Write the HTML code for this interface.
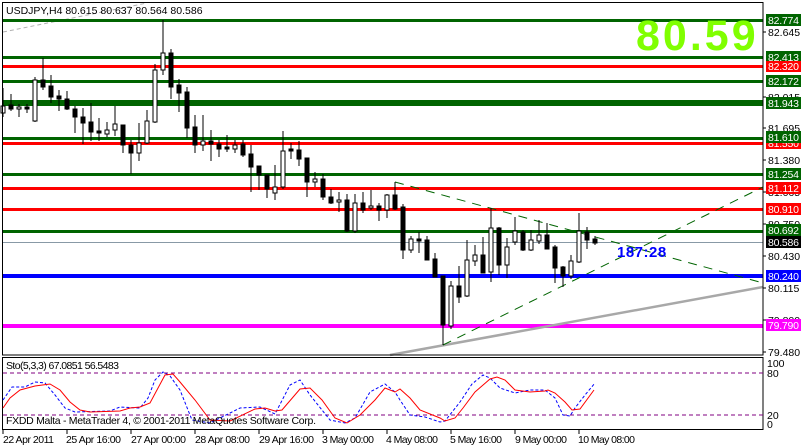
<!DOCTYPE html>
<html><head><meta charset="utf-8"><style>
html,body{margin:0;padding:0;background:#fff;width:801px;height:447px;overflow:hidden}
svg{display:block;font-family:"Liberation Sans",sans-serif}
</style></head><body>
<svg width="801" height="447" viewBox="0 0 801 447" xmlns="http://www.w3.org/2000/svg">
<rect x="0" y="0" width="801" height="447" fill="#fff"/>
<polyline points="3,32 147,3" stroke="#b0b0b0" stroke-width="1" stroke-dasharray="4,3" fill="none"/>
<g>
<rect x="3" y="19" width="760" height="3" fill="#006400"/>
<rect x="3" y="56" width="760" height="3" fill="#006400"/>
<rect x="3" y="65" width="760" height="3" fill="#ff0000"/>
<rect x="3" y="80" width="760" height="3" fill="#006400"/>
<rect x="3" y="100" width="760" height="6" fill="#006400"/>
<rect x="3" y="137" width="760" height="3" fill="#006400"/>
<rect x="3" y="142" width="760" height="3" fill="#ff0000"/>
<rect x="3" y="173" width="760" height="3" fill="#006400"/>
<rect x="3" y="187" width="760" height="3" fill="#ff0000"/>
<rect x="3" y="208" width="760" height="3" fill="#ff0000"/>
<rect x="3" y="230" width="760" height="3" fill="#006400"/>
<rect x="3" y="242" width="760" height="1" fill="#8899a6"/>
<rect x="3" y="274" width="760" height="4" fill="#0000ff"/>
<rect x="3" y="324" width="760" height="4" fill="#ff00ff"/>
</g>
<line x1="390" y1="355" x2="763" y2="287" stroke="#a8a8a8" stroke-width="2.5"/>
<line x1="395" y1="182" x2="763" y2="283" stroke="#006400" stroke-width="1" stroke-dasharray="9,7"/>
<line x1="443" y1="345" x2="763" y2="187" stroke="#006400" stroke-width="1" stroke-dasharray="9,7"/>
<g stroke="#000" stroke-width="1" shape-rendering="crispEdges">
<line x1="3" y1="88" x2="3" y2="117"/><rect x="1" y="106" width="4" height="7" fill="#fff"/>
<line x1="11" y1="94" x2="11" y2="111"/><rect x="9" y="105" width="4" height="4" fill="#000"/>
<line x1="19" y1="104" x2="19" y2="117"/><rect x="17" y="107" width="4" height="2" fill="#fff"/>
<line x1="27" y1="104" x2="27" y2="113"/><rect x="25" y="107" width="4" height="2" fill="#000"/>
<line x1="35" y1="77" x2="35" y2="122"/><rect x="33" y="80" width="4" height="41" fill="#fff"/>
<line x1="43" y1="58" x2="43" y2="90"/><rect x="41" y="80" width="4" height="7" fill="#000"/>
<line x1="51" y1="75" x2="51" y2="103"/><rect x="49" y="86" width="4" height="11" fill="#000"/>
<line x1="59" y1="90" x2="59" y2="111"/><rect x="57" y="96" width="4" height="3" fill="#000"/>
<line x1="67" y1="91" x2="67" y2="110"/><rect x="65" y="99" width="4" height="10" fill="#000"/>
<line x1="75" y1="106" x2="75" y2="133"/><rect x="73" y="109" width="4" height="8" fill="#000"/>
<line x1="83" y1="108" x2="83" y2="144"/><rect x="81" y="117" width="4" height="6" fill="#000"/>
<line x1="91" y1="103" x2="91" y2="141"/><rect x="89" y="122" width="4" height="10" fill="#000"/>
<line x1="99" y1="118" x2="99" y2="141"/><rect x="97" y="131" width="4" height="2" fill="#000"/>
<line x1="107" y1="122" x2="107" y2="137"/><rect x="105" y="130" width="4" height="4" fill="#fff"/>
<line x1="115" y1="106" x2="115" y2="136"/><rect x="113" y="124" width="4" height="6" fill="#fff"/>
<line x1="123" y1="125" x2="123" y2="153"/><rect x="121" y="125" width="4" height="20" fill="#000"/>
<line x1="131" y1="140" x2="131" y2="174"/><rect x="129" y="145" width="4" height="8" fill="#000"/>
<line x1="139" y1="123" x2="139" y2="161"/><rect x="137" y="143" width="4" height="10" fill="#fff"/>
<line x1="147" y1="110" x2="147" y2="144"/><rect x="145" y="121" width="4" height="22" fill="#fff"/>
<line x1="155" y1="64" x2="155" y2="123"/><rect x="153" y="70" width="4" height="52" fill="#fff"/>
<line x1="163" y1="20" x2="163" y2="75"/><rect x="161" y="53" width="4" height="17" fill="#fff"/>
<line x1="171" y1="49" x2="171" y2="99"/><rect x="169" y="53" width="4" height="34" fill="#000"/>
<line x1="179" y1="79" x2="179" y2="112"/><rect x="177" y="85" width="4" height="8" fill="#000"/>
<line x1="187" y1="87" x2="187" y2="138"/><rect x="185" y="92" width="4" height="36" fill="#000"/>
<line x1="195" y1="115" x2="195" y2="153"/><rect x="193" y="127" width="4" height="18" fill="#000"/>
<line x1="203" y1="115" x2="203" y2="151"/><rect x="201" y="141" width="4" height="4" fill="#fff"/>
<line x1="211" y1="130" x2="211" y2="161"/><rect x="209" y="141" width="4" height="3" fill="#000"/>
<line x1="219" y1="140" x2="219" y2="157"/><rect x="217" y="144" width="4" height="5" fill="#000"/>
<line x1="227" y1="135" x2="227" y2="152"/><rect x="225" y="147" width="4" height="2" fill="#000"/>
<line x1="235" y1="140" x2="235" y2="153"/><rect x="233" y="145" width="4" height="4" fill="#fff"/>
<line x1="243" y1="140" x2="243" y2="157"/><rect x="241" y="144" width="4" height="11" fill="#000"/>
<line x1="251" y1="145" x2="251" y2="192"/><rect x="249" y="154" width="4" height="13" fill="#000"/>
<line x1="259" y1="166" x2="259" y2="190"/><rect x="257" y="166" width="4" height="9" fill="#000"/>
<line x1="267" y1="175" x2="267" y2="198"/><rect x="265" y="175" width="4" height="14" fill="#000"/>
<line x1="275" y1="165" x2="275" y2="200"/><rect x="273" y="187" width="4" height="6" fill="#fff"/>
<line x1="283" y1="131" x2="283" y2="189"/><rect x="281" y="151" width="4" height="36" fill="#fff"/>
<line x1="291" y1="143" x2="291" y2="159"/><rect x="289" y="149" width="4" height="2" fill="#000"/>
<line x1="299" y1="141" x2="299" y2="166"/><rect x="297" y="150" width="4" height="9" fill="#000"/>
<line x1="307" y1="158" x2="307" y2="197"/><rect x="305" y="158" width="4" height="24" fill="#000"/>
<line x1="315" y1="172" x2="315" y2="187"/><rect x="313" y="179" width="4" height="3" fill="#fff"/>
<line x1="323" y1="174" x2="323" y2="200"/><rect x="321" y="179" width="4" height="18" fill="#000"/>
<line x1="331" y1="189" x2="331" y2="204"/><rect x="329" y="197" width="4" height="6" fill="#000"/>
<line x1="339" y1="192" x2="339" y2="212"/><rect x="337" y="200" width="4" height="2" fill="#fff"/>
<line x1="347" y1="194" x2="347" y2="232"/><rect x="345" y="200" width="4" height="31" fill="#000"/>
<line x1="355" y1="194" x2="355" y2="233"/><rect x="353" y="203" width="4" height="28" fill="#fff"/>
<line x1="363" y1="192" x2="363" y2="213"/><rect x="361" y="203" width="4" height="7" fill="#000"/>
<line x1="371" y1="190" x2="371" y2="210"/><rect x="369" y="206" width="4" height="2" fill="#fff"/>
<line x1="379" y1="203" x2="379" y2="221"/><rect x="377" y="206" width="4" height="4" fill="#000"/>
<line x1="387" y1="194" x2="387" y2="218"/><rect x="385" y="195" width="4" height="15" fill="#fff"/>
<line x1="395" y1="182" x2="395" y2="210"/><rect x="393" y="195" width="4" height="14" fill="#000"/>
<line x1="403" y1="204" x2="403" y2="259"/><rect x="401" y="207" width="4" height="43" fill="#000"/>
<line x1="411" y1="236" x2="411" y2="253"/><rect x="409" y="239" width="4" height="11" fill="#fff"/>
<line x1="419" y1="232" x2="419" y2="253"/><rect x="417" y="239" width="4" height="2" fill="#000"/>
<line x1="427" y1="236" x2="427" y2="260"/><rect x="425" y="240" width="4" height="20" fill="#000"/>
<line x1="435" y1="253" x2="435" y2="277"/><rect x="433" y="259" width="4" height="18" fill="#000"/>
<line x1="443" y1="276" x2="443" y2="345"/><rect x="441" y="276" width="4" height="49" fill="#000"/>
<line x1="451" y1="281" x2="451" y2="329"/><rect x="449" y="286" width="4" height="40" fill="#fff"/>
<line x1="459" y1="266" x2="459" y2="303"/><rect x="457" y="286" width="4" height="11" fill="#000"/>
<line x1="467" y1="240" x2="467" y2="297"/><rect x="465" y="260" width="4" height="36" fill="#fff"/>
<line x1="475" y1="245" x2="475" y2="266"/><rect x="473" y="255" width="4" height="6" fill="#fff"/>
<line x1="483" y1="237" x2="483" y2="273"/><rect x="481" y="255" width="4" height="18" fill="#000"/>
<line x1="491" y1="208" x2="491" y2="282"/><rect x="489" y="228" width="4" height="44" fill="#fff"/>
<line x1="499" y1="227" x2="499" y2="275"/><rect x="497" y="228" width="4" height="37" fill="#000"/>
<line x1="507" y1="238" x2="507" y2="278"/><rect x="505" y="247" width="4" height="18" fill="#fff"/>
<line x1="515" y1="217" x2="515" y2="245"/><rect x="513" y="231" width="4" height="11" fill="#fff"/>
<line x1="523" y1="230" x2="523" y2="251"/><rect x="521" y="232" width="4" height="18" fill="#000"/>
<line x1="531" y1="230" x2="531" y2="251"/><rect x="529" y="240" width="4" height="10" fill="#fff"/>
<line x1="539" y1="220" x2="539" y2="244"/><rect x="537" y="235" width="4" height="6" fill="#fff"/>
<line x1="547" y1="223" x2="547" y2="249"/><rect x="545" y="235" width="4" height="14" fill="#000"/>
<line x1="555" y1="245" x2="555" y2="283"/><rect x="553" y="247" width="4" height="21" fill="#000"/>
<line x1="563" y1="266" x2="563" y2="287"/><rect x="561" y="267" width="4" height="9" fill="#000"/>
<line x1="571" y1="255" x2="571" y2="279"/><rect x="569" y="261" width="4" height="15" fill="#fff"/>
<line x1="579" y1="213" x2="579" y2="263"/><rect x="577" y="231" width="4" height="31" fill="#fff"/>
<line x1="587" y1="227" x2="587" y2="249"/><rect x="585" y="232" width="4" height="8" fill="#000"/>
<line x1="595" y1="236" x2="595" y2="245"/><rect x="593" y="239" width="4" height="4" fill="#000"/>
</g>
<text x="617" y="257" font-size="15" font-weight="bold" fill="#0000ff" letter-spacing="0.5">187:28</text>
<text x="636" y="50" font-size="43" font-weight="bold" fill="#80ff00" letter-spacing="3">80.59</text>
<text x="6" y="14" font-size="10.5" fill="#000">USDJPY,H4  80.615 80.637 80.564 80.586</text>
<rect x="2.5" y="2.5" width="760.5" height="352.5" fill="none" stroke="#000" stroke-width="1"/>
<rect x="2.5" y="357.5" width="760.5" height="72" fill="none" stroke="#000" stroke-width="1"/>
<g font-size="10.5" fill="#000">
<g stroke="#000"><line x1="763" y1="32" x2="766" y2="32"/><line x1="763" y1="97" x2="766" y2="97"/><line x1="763" y1="128" x2="766" y2="128"/><line x1="763" y1="160" x2="766" y2="160"/><line x1="763" y1="192" x2="766" y2="192"/><line x1="763" y1="224" x2="766" y2="224"/><line x1="763" y1="256" x2="766" y2="256"/><line x1="763" y1="288" x2="766" y2="288"/><line x1="763" y1="320" x2="766" y2="320"/><line x1="763" y1="352" x2="766" y2="352"/></g>
<text x="768" y="36">82.645</text>
<text x="768" y="101">82.015</text>
<text x="768" y="132">81.695</text>
<text x="768" y="164">81.380</text>
<text x="768" y="196">81.065</text>
<text x="768" y="228">80.750</text>
<text x="768" y="260">80.430</text>
<text x="768" y="292">80.115</text>
<text x="768" y="324">79.800</text>
<text x="768" y="356">79.480</text>
</g>
<g font-size="10.5" fill="#fff">
<rect x="766" y="14" width="35" height="12" fill="#006400"/><text x="768" y="24" textLength="31">82.774</text>
<rect x="766" y="60" width="35" height="12" fill="#ff0000"/><text x="768" y="70" textLength="31">82.320</text>
<rect x="766" y="51" width="35" height="10" fill="#006400"/><text x="768" y="61" textLength="31">82.413</text>
<rect x="766" y="75" width="35" height="12" fill="#006400"/><text x="768" y="85" textLength="31">82.172</text>
<rect x="766" y="97" width="35" height="12" fill="#006400"/><text x="768" y="107" textLength="31">81.943</text>
<rect x="766" y="137" width="35" height="12" fill="#ff0000"/><text x="768" y="147" textLength="31">81.550</text>
<rect x="766" y="131" width="35" height="12" fill="#006400"/><text x="768" y="141" textLength="31">81.610</text>
<rect x="766" y="168" width="35" height="12" fill="#006400"/><text x="768" y="178" textLength="31">81.254</text>
<rect x="766" y="182" width="35" height="12" fill="#ff0000"/><text x="768" y="192" textLength="31">81.112</text>
<rect x="766" y="203" width="35" height="12" fill="#ff0000"/><text x="768" y="213" textLength="31">80.910</text>
<rect x="766" y="224" width="35" height="12" fill="#006400"/><text x="768" y="234" textLength="31">80.692</text>
<rect x="766" y="236" width="35" height="12" fill="#000"/><text x="768" y="246" textLength="31">80.586</text>
<rect x="766" y="270" width="35" height="12" fill="#0000ff"/><text x="768" y="280" textLength="31">80.240</text>
<rect x="766" y="319" width="35" height="12" fill="#ff00ff"/><text x="768" y="329" textLength="31">79.790</text>
</g>
<line x1="3" y1="373" x2="763" y2="373" stroke="#800080" stroke-dasharray="4,3"/>
<line x1="3" y1="415" x2="763" y2="415" stroke="#800080" stroke-dasharray="4,3"/>
<polyline fill="none" stroke="#0000ff" stroke-width="1" stroke-dasharray="3,2" points="3,400 12,387 25,387 35,382 45,383 55,395 65,408 75,412 110,411 120,407 140,408 148,398 155,380 163,372 170,376 180,390 192,420 210,423 240,408 260,407 275,414 290,385 300,380 310,395 330,420 345,423 355,418 370,392 385,384 395,392 400,400 410,415 425,417 440,422 445,421 460,402 472,384 483,375 490,378 500,388 515,393 530,390 545,390 555,398 563,415 570,416 575,408 585,395 595,383"/>
<polyline fill="none" stroke="#ff0000" stroke-width="1" points="3,408 10,398 20,390 35,386 50,384 60,390 70,402 80,410 90,412 120,411 130,408 140,407 150,403 165,375 173,374 180,382 195,400 210,420 230,421 255,409 265,408 275,411 282,410 300,389 310,388 322,400 335,418 347,423 360,415 375,400 385,388 395,392 400,389 410,398 420,410 440,418 445,421 455,418 463,408 475,392 490,379 497,377 505,380 515,390 530,392 545,391 548,390 555,393 565,402 572,410 580,409 594,390"/>
<text x="6" y="369" font-size="10.5" fill="#000" textLength="113">Sto(5,3,3) 67.0851 56.5483</text>
<text x="6" y="424" font-size="10.5" fill="#000" textLength="310">FXDD Malta - MetaTrader 4, © 2001-2011 MetaQuotes Software Corp.</text>
<g font-size="10.5" fill="#000">
<text x="767" y="367">100</text><text x="767" y="377">80</text><text x="767" y="419">20</text><text x="767" y="428">0</text>
</g>
<g stroke="#000"><line x1="3" y1="430" x2="3" y2="434"/><line x1="67" y1="430" x2="67" y2="434"/><line x1="131" y1="430" x2="131" y2="434"/><line x1="195" y1="430" x2="195" y2="434"/><line x1="259" y1="430" x2="259" y2="434"/><line x1="323" y1="430" x2="323" y2="434"/><line x1="387" y1="430" x2="387" y2="434"/><line x1="451" y1="430" x2="451" y2="434"/><line x1="515" y1="430" x2="515" y2="434"/><line x1="579" y1="430" x2="579" y2="434"/></g>
<g font-size="10.5" fill="#000">
<text x="3" y="443" textLength="51">22 Apr 2011</text>
<text x="66" y="443" textLength="55">25 Apr 16:00</text>
<text x="131" y="443" textLength="55">27 Apr 00:00</text>
<text x="195" y="443" textLength="55">28 Apr 08:00</text>
<text x="259" y="443" textLength="55">29 Apr 16:00</text>
<text x="322" y="443" textLength="52">3 May 00:00</text>
<text x="386" y="443" textLength="52">4 May 08:00</text>
<text x="450" y="443" textLength="52">5 May 16:00</text>
<text x="515" y="443" textLength="52">9 May 00:00</text>
<text x="578" y="443" textLength="57">10 May 08:00</text>
</g>
</svg>
</body></html>
